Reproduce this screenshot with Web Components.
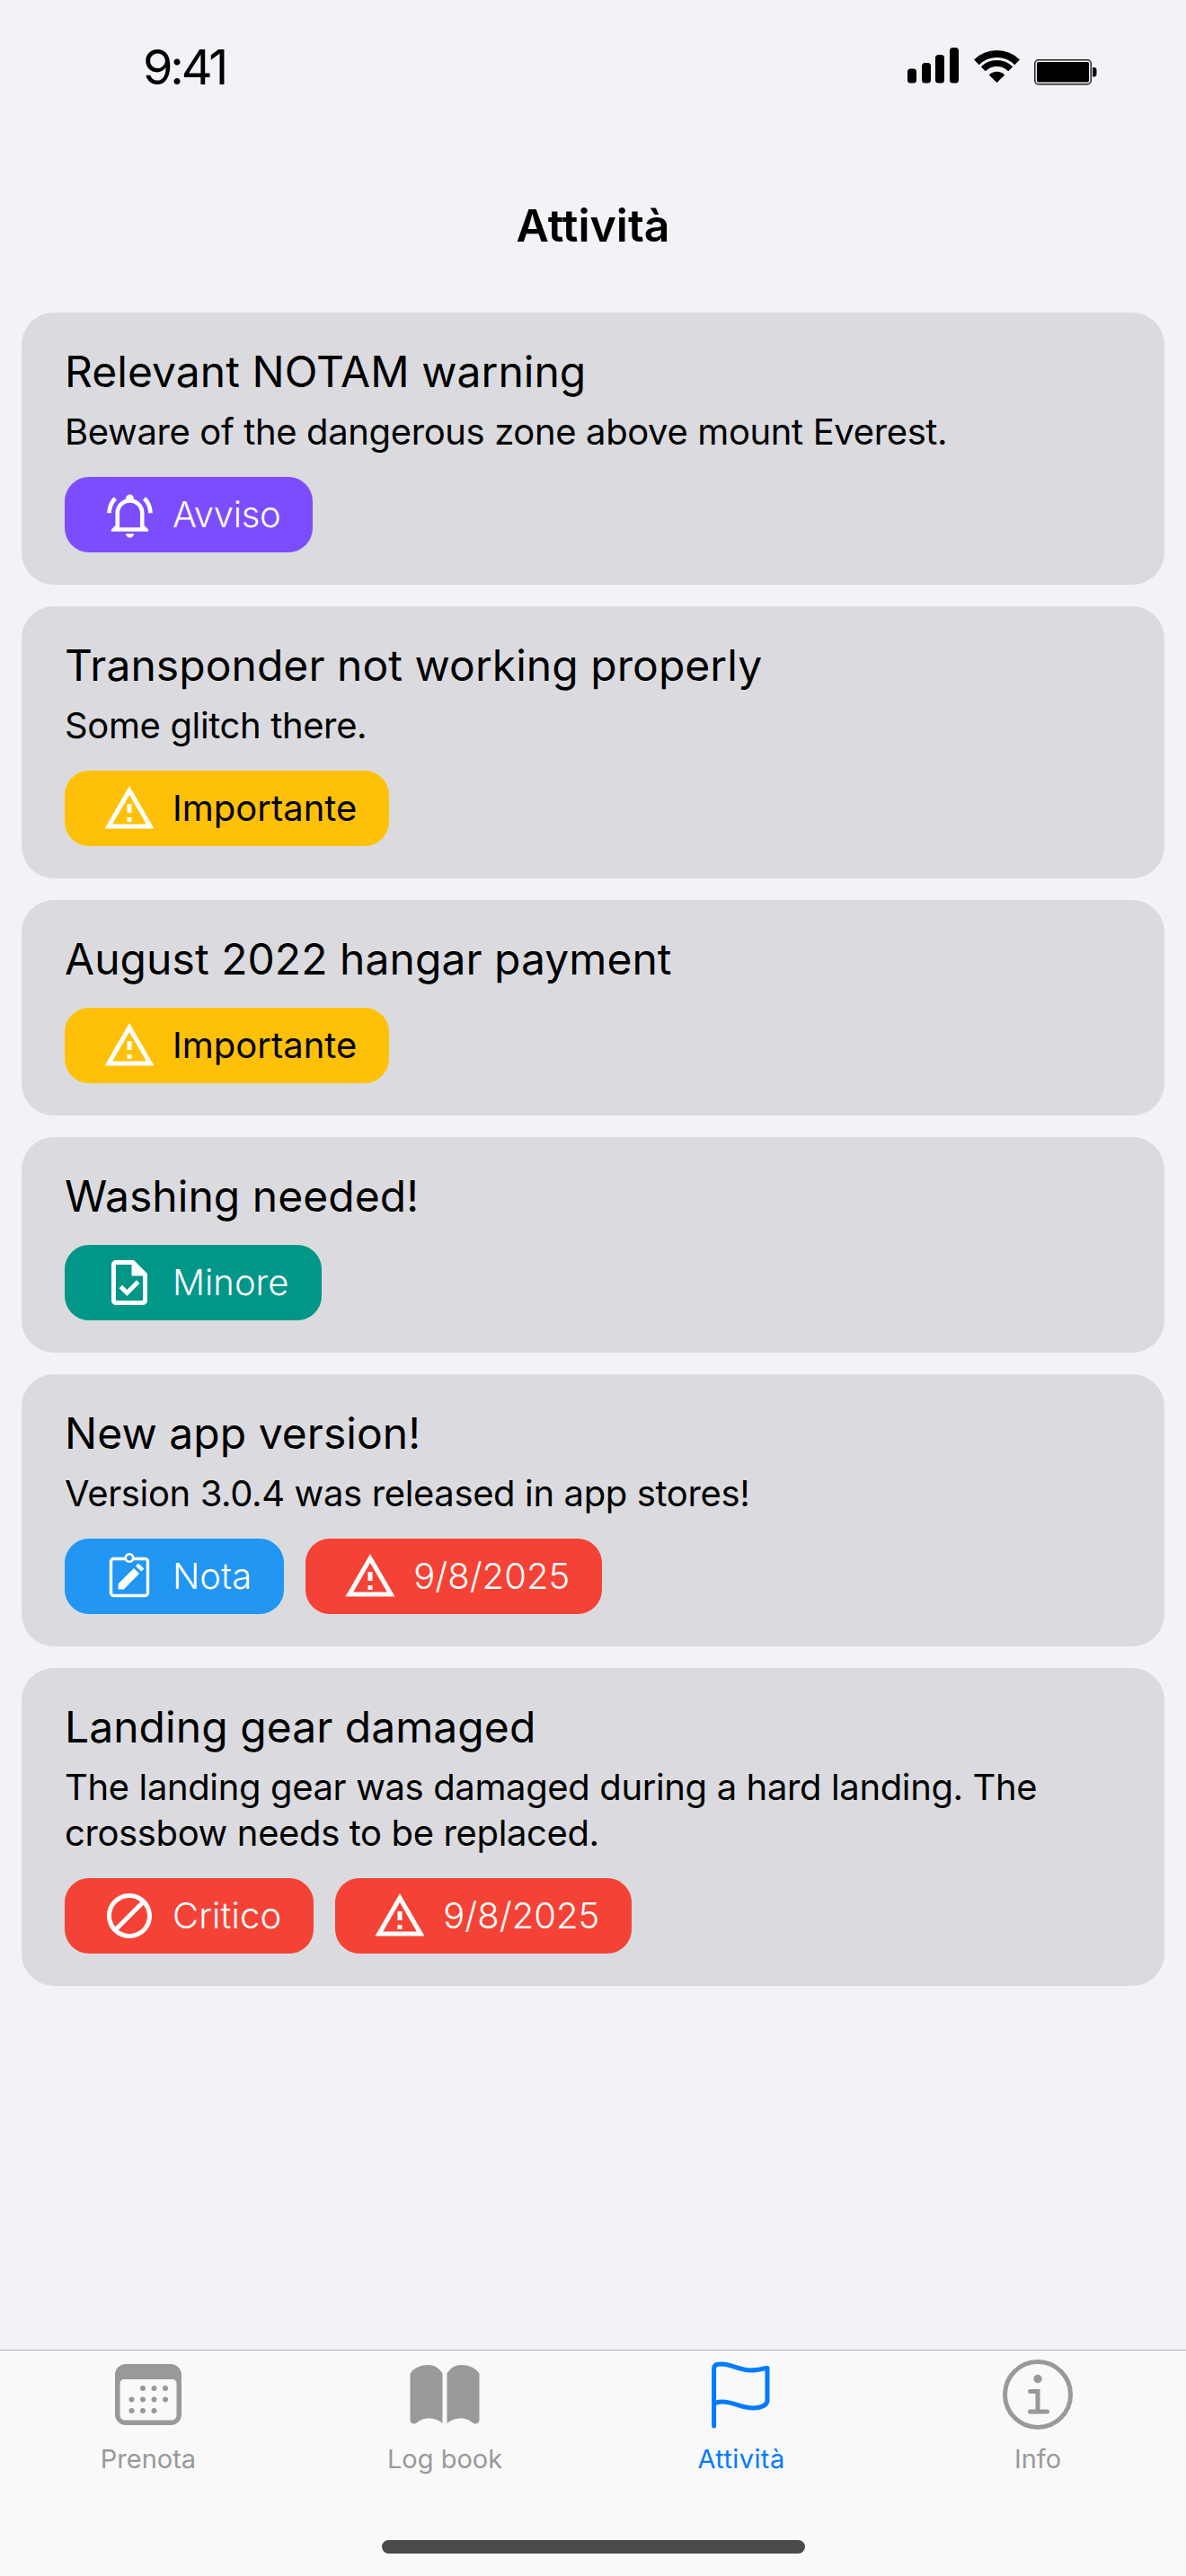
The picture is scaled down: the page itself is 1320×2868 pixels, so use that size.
<!DOCTYPE html>
<html lang="it">
<head>
<meta charset="utf-8">
<title>Attività</title>
<style>
  html, body { margin: 0; padding: 0; background: #f2f2f7; }
  body { font-family: Inter, "Liberation Sans", sans-serif; color: #000; }
</style>
</head>
<body>
<app-shell>
  <status-bar slot="top"></status-bar>
  <nav-title slot="top">Attività</nav-title>
  <task-list>
    <task-card>
      <span slot="title">Relevant NOTAM warning</span>
      <span slot="desc">Beware of the dangerous zone above mount Everest.</span>
      <task-badge slot="badges" tone="purple" icon="bell" track="-0.35">Avviso</task-badge>
    </task-card>
    <task-card>
      <span slot="title">Transponder not working properly</span>
      <span slot="desc">Some glitch there.</span>
      <task-badge slot="badges" tone="amber" icon="alert" track="0">Importante</task-badge>
    </task-card>
    <task-card>
      <span slot="title">August 2022 hangar payment</span>
      <task-badge slot="badges" tone="amber" icon="alert" track="0">Importante</task-badge>
    </task-card>
    <task-card>
      <span slot="title">Washing needed!</span>
      <task-badge slot="badges" tone="teal" icon="file" track="0">Minore</task-badge>
    </task-card>
    <task-card>
      <span slot="title">New app version!</span>
      <span slot="desc">Version 3.0.4 was released in app stores!</span>
      <task-badge slot="badges" tone="blue" icon="clip" track="0">Nota</task-badge>
      <task-badge slot="badges" tone="red" icon="alert" track="0">9/8/2025</task-badge>
    </task-card>
    <task-card>
      <span slot="title">Landing gear damaged</span>
      <span slot="desc">The landing gear was damaged during a hard landing. The crossbow needs to be replaced.</span>
      <task-badge slot="badges" tone="red" icon="block" track="0.1">Critico</task-badge>
      <task-badge slot="badges" tone="red" icon="alert" track="0">9/8/2025</task-badge>
    </task-card>
  </task-list>
  <tab-bar slot="bottom">
    <tab-item icon="calendar">Prenota</tab-item>
    <tab-item icon="book">Log book</tab-item>
    <tab-item icon="flag" active>Attività</tab-item>
    <tab-item icon="info">Info</tab-item>
  </tab-bar>
</app-shell>

<script>
function shadow(el, html) {
  el.attachShadow({ mode: 'open' }).innerHTML = html;
}

class AppShell extends HTMLElement {
  constructor() {
    super();
    shadow(this, `<style>
      :host { display: flex; flex-direction: column; width: 1320px; height: 2868px; background: #f2f2f7; overflow: hidden; }
      main { flex: 1; min-height: 0; }
    </style>
    <slot name="top"></slot><main><slot></slot></main><slot name="bottom"></slot>`);
  }
}

class StatusBar extends HTMLElement {
  constructor() {
    super();
    shadow(this, `<style>
      :host { display: flex; justify-content: space-between; box-sizing: border-box; height: 110px; padding: 48px 99px 0 159px; }
      .time { font: 400 54px/54px Inter, sans-serif; letter-spacing: -3.2px; }
      .icons { display: flex; align-items: flex-start; padding-top: 5px; }
      svg { display: block; }
      .wifi { margin-left: 16px; margin-top: 0; }
      .bat { margin-left: 15px; margin-top: 13px; }
    </style>
    <span class="time">9:41</span>
    <div class="icons">
      <svg width="57" height="40" viewBox="0 0 57 40" fill="#000">
        <rect x="0" y="23.5" width="10" height="16" rx="3.5"/>
        <rect x="16" y="17" width="10" height="22.5" rx="3.5"/>
        <rect x="31" y="8" width="10" height="31.5" rx="3.5"/>
        <rect x="47" y="0" width="10" height="39.5" rx="3.5"/>
      </svg>
      <svg class="wifi" width="53" height="40" viewBox="0 0 53 40" fill="none" stroke="#000">
        <path d="M3.9 16.4A32 32 0 0 1 49.1 16.4" stroke-width="8"/>
        <path d="M11.3 23.8A21.5 21.5 0 0 1 41.7 23.8" stroke-width="7"/>
        <path d="M26.5 39 L17.8 30.4A12.3 12.3 0 0 1 35.2 30.4Z" fill="#000" stroke="none"/>
      </svg>
      <svg class="bat" width="70" height="29" viewBox="0 0 70 29">
        <rect x=".75" y=".75" width="62.5" height="27" rx="4" fill="none" stroke="#222" stroke-width="1.5"/>
        <rect x="3" y="3" width="58" height="22.5" rx="1.5" fill="#000"/>
        <path d="M65 9h1.5a3 3 0 0 1 3 3v4.500a3 3 0 0 1-3 3H65z" fill="#111"/>
      </svg>
    </div>`);
  }
}

class NavTitle extends HTMLElement {
  constructor() {
    super();
    shadow(this, `<style>
      :host { display: block; box-sizing: border-box; height: 238px; padding-top: 111px; text-align: center; font: 600 50px/60px Inter, sans-serif; }
    </style><slot></slot>`);
  }
}

class TaskList extends HTMLElement {
  constructor() {
    super();
    shadow(this, `<style>
      :host { display: flex; flex-direction: column; gap: 24px; padding: 0 24px; }
    </style><slot></slot>`);
  }
}

class TaskCard extends HTMLElement {
  constructor() {
    super();
    shadow(this, `<style>
      :host { display: block; box-sizing: border-box; padding: 36px 48px; background: #dbdbdf; border-radius: 36px; }
      ::slotted([slot=title]) { display: block; font: 400 48px/60px Inter, sans-serif; letter-spacing: .05px; color: #000; }
      ::slotted([slot=desc]) { display: block; margin-top: 11px; padding-bottom: 1px; font: 400 40px/51px Inter, sans-serif; letter-spacing: -.37px; color: #000; }
      .badges { display: flex; gap: 24px; margin-top: 24px; }
    </style>
    <slot name="title"></slot><slot name="desc"></slot>
    <div class="badges"><slot name="badges"></slot></div>`);
  }
}

const BADGE_ICONS = {
  bell: [55, 'M10,21H14A2,2 0 0,1 12,23A2,2 0 0,1 10,21M21,19V20H3V19L5,17V11C5,7.9 7.03,5.17 10,4.29C10,4.19 10,4.1 10,4A2,2 0 0,1 12,2A2,2 0 0,1 14,4C14,4.1 14,4.19 14,4.29C16.97,5.17 19,7.9 19,11V17L21,19M17,11A5,5 0 0,0 12,6A5,5 0 0,0 7,11V18H17V11M19.75,3.19L18.33,4.61C20.04,6.3 21,8.6 21,11H23C23,8.07 21.84,5.25 19.75,3.19M1,11H3C3,8.6 3.96,6.3 5.67,4.61L4.25,3.19C2.16,5.25 1,8.07 1,11Z'],
  alert: [60, 'M12,2L1,21H23M12,6L19.53,19H4.47M11,10V14H13V10M11,16V18H13V16'],
  file: [60, 'M14 2H6c-1.1 0-2 .9-2 2v16c0 1.1.9 2 2 2h12c1.1 0 2-.9 2-2V8l-6-6zm4 18H6V4h7v5h5v11zm-9.18-6.95L7.4 14.46 10.94 18l5.66-5.66-1.41-1.41-4.24 4.24-2.13-2.12z'],
  block: [60, 'M12 2C6.48 2 2 6.48 2 12s4.48 10 10 10 10-4.48 10-10S17.52 2 12 2zM4 12c0-4.42 3.58-8 8-8 1.85 0 3.55.63 4.9 1.69L5.69 16.9C4.63 15.55 4 13.85 4 12zm8 8c-1.85 0-3.55-.63-4.9-1.69L18.31 7.1C19.37 8.45 20 10.15 20 12c0 4.42-3.58 8-8 8z']
};
const TONES = {
  purple: ['#7c4dff', '#fff'],
  amber: ['#ffc107', '#000'],
  teal: ['#009688', '#fff'],
  blue: ['#2196f3', '#fff'],
  red: ['#f44336', '#fff']
};

class TaskBadge extends HTMLElement {
  constructor() {
    super();
    const [bg, fg] = TONES[this.getAttribute('tone')];
    const name = this.getAttribute('icon');
    const track = this.getAttribute('track') || '0';
    let icon;
    if (name === 'clip') {
      icon = `<svg width="60" height="60" viewBox="0 0 60 60" style="margin:-6px" fill="none" stroke="#fff">
        <rect x="9.500" y="10.500" width="41" height="41" rx="3" stroke-width="3.4"/>
        <circle cx="30" cy="9.500" r="4.200" stroke-width="2.6" fill="#2196f3"/>
        <path d="M17.700 44.500v-6.200L35 21l6 6-17.200 17.500z" fill="#fff" stroke="none"/>
        <path d="M37 18.500l3-3 6.300 6-3 3.200z" fill="#fff" stroke="none"/>
      </svg>`;
    } else {
      const [s, d] = BADGE_ICONS[name];
      const m = (48 - s) / 2;
      icon = `<svg width="${s}" height="${s}" viewBox="0 0 24 24" style="margin:${m}px" fill="#fff"><path d="${d}"/></svg>`;
    }
    shadow(this, `<style>
      :host { display: inline-flex; align-items: center; box-sizing: border-box; height: 84px; padding: 0 36px 0 48px; border-radius: 27px; background: ${bg}; color: ${fg}; font: ${fg === '#fff' ? 350 : 400} 40px/48px Inter, sans-serif; letter-spacing: ${track}px; white-space: nowrap; }
      .i { display: flex; width: 48px; height: 48px; margin-right: 24px; flex: none; }
      svg { display: block; flex: none; }
    </style><span class="i">${icon}</span><slot></slot>`);
  }
}

const TAB_ICONS = {
  calendar: `<svg width="76" height="70" viewBox="0 0 76 70" fill="#999">
    <path fill-rule="evenodd" d="M13 1H63A12 12 0 0 1 75 13V57A12 12 0 0 1 63 69H13A12 12 0 0 1 1 57V13A12 12 0 0 1 13 1ZM11 18A4.500 4.500 0 0 0 6.500 22.500V58A5.500 5.500 0 0 0 12 63.500H64A5.500 5.500 0 0 0 69.500 58V22.500A4.500 4.500 0 0 0 65 18Z"/>
    <circle cx="32" cy="28" r="3"/><circle cx="44.500" cy="28" r="3"/><circle cx="57" cy="28" r="3"/>
    <circle cx="19.500" cy="40.500" r="3"/><circle cx="32" cy="40.500" r="3"/><circle cx="44.500" cy="40.500" r="3"/><circle cx="57" cy="40.500" r="3"/>
    <circle cx="19.500" cy="53" r="3"/><circle cx="32" cy="53" r="3"/><circle cx="44.500" cy="53" r="3"/>
  </svg>`,
  book: `<svg width="78" height="68" viewBox="0 0 78 68" fill="#999">
    <path d="M.5 11C4 4 13 1 21 1C28 1 33 5 36.500 10.500V66C32 62 27 60.500 21 60.500C14 60.500 11 63 7 66C4 67.500 .5 66 .5 62Z"/>
    <path d="M77.500 11C74 4 65 1 57 1C50 1 45 5 41.500 10.500V66C46 62 51 60.500 57 60.500C64 60.500 67 63 71 66C74 67.500 77.500 66 77.500 62Z"/>
  </svg>`,
  flag: `<svg width="70" height="76" viewBox="0 0 70 76" fill="none" stroke="#007aff" stroke-width="5" stroke-linecap="round" stroke-linejoin="round">
    <path d="M4.600 73V10C4.600 5 7 4 13 4C24 4 32 11 46 11C53 11 59 9 64 8.500V46C62 51 56 53 48 53C35 53 26 46 14 46C9 46 4.600 47 4.600 50"/>
  </svg>`,
  info: `<svg width="78" height="78" viewBox="0 0 78 78" fill="none" stroke="#999" stroke-width="5" stroke-linecap="round">
    <circle cx="39" cy="39" r="36.500"/>
    <circle cx="39" cy="21.500" r="4.700" fill="#999" stroke="none"/>
    <path d="M30.500 35.500H39V57.500M30.500 58H49.500" stroke-width="5"/>
  </svg>`
};

class TabBar extends HTMLElement {
  constructor() {
    super();
    shadow(this, `<style>
      :host { display: flex; flex-direction: column; align-items: center; box-sizing: border-box; height: 252px; background: #f9f9f9; border-top: 1px solid #b2b2b2; padding-top: 7px; }
      .tabs { display: grid; grid-template-columns: repeat(4, 1fr); width: 100%; }
      .home { width: 471px; height: 15px; border-radius: 8px; background: #4a4a4a; margin-top: 72px; }
    </style><div class="tabs"><slot></slot></div><div class="home"></div>`);
  }
}

class TabItem extends HTMLElement {
  constructor() {
    super();
    const active = this.hasAttribute('active');
    shadow(this, `<style>
      :host { display: flex; flex-direction: column; align-items: center; color: ${active ? '#007aff' : '#999'}; font: 400 29px/36px Inter, sans-serif; letter-spacing: ${active ? '.4px' : '0'}; }
      .i { display: flex; align-items: center; justify-content: center; height: 84px; margin-bottom: 12px; }
      svg { display: block; }
    </style><span class="i">${TAB_ICONS[this.getAttribute('icon')]}</span><slot></slot>`);
  }
}

customElements.define('app-shell', AppShell);
customElements.define('status-bar', StatusBar);
customElements.define('nav-title', NavTitle);
customElements.define('task-list', TaskList);
customElements.define('task-card', TaskCard);
customElements.define('task-badge', TaskBadge);
customElements.define('tab-bar', TabBar);
customElements.define('tab-item', TabItem);
</script>
</body>
</html>
